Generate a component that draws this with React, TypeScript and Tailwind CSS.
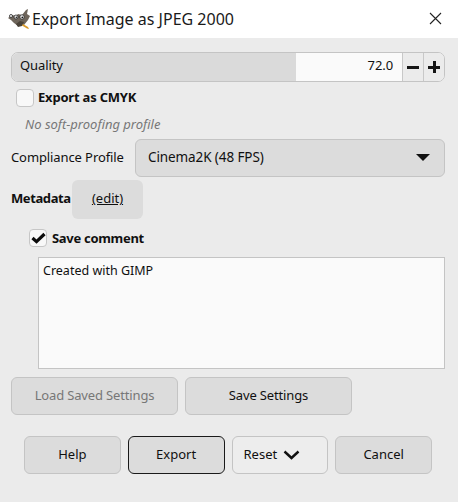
const font = "font-['Noto_Sans',sans-serif]";
const btn = "flex h-[38px] items-center justify-center rounded-[6px] border";
const plain = "border-[#c4c4c4] bg-[#dcdcdc] text-[#101010]";

const GimpLogo = () => (
  <svg width="24" height="22" viewBox="0 0 24 22" className="shrink-0">
    <path d="M1 10 L5 7 L9 8 L11 6 L15 7 L19 2 L21 1 L20 6 L23 8 L21 12 L17 17 L11 18 L7 15 L4 12 Z" fill="#6e655b" />
    <path d="M9 16 L13 13 L17 14 L15 18 L11 19 Z" fill="#4a4339" />
    <circle cx="4" cy="8" r="1.5" fill="#fff" stroke="#222" strokeWidth="0.8" />
    <circle cx="9" cy="9" r="2" fill="#fff" stroke="#222" strokeWidth="0.8" />
    <circle cx="15" cy="9" r="2.2" fill="#fff" stroke="#222" strokeWidth="0.8" />
    <circle cx="9.3" cy="9.3" r="0.8" fill="#111" />
    <circle cx="15.3" cy="9.3" r="0.9" fill="#111" />
    <path d="M16 16 L21 19 L22 21 L20 20.5 L15 17.5 Z" fill="#d99a2b" />
  </svg>
);

const Check = () => (
  <svg width="15" height="12" viewBox="0 0 15 12">
    <path d="M1.5 6 L5.5 9.6 L13.5 2" fill="none" stroke="#0c0c0c" strokeWidth="3.2" />
  </svg>
);

export default function App() {
  return (
    <div className={`${font} flex h-[502px] w-[458px] flex-col overflow-hidden bg-[#ebebeb] text-[#101010]`}>
      <div className="flex h-[38px] items-center bg-white pl-[7px] pr-[16px]">
        <GimpLogo />
        <span className="ml-[1px] flex-1 text-[16px] text-[#1a1a1a]">Export Image as JPEG 2000</span>
        <svg width="13" height="13" viewBox="0 0 13 13" className="mb-[2px]">
          <path d="M1 1 L12 12 M12 1 L1 12" stroke="#222" strokeWidth="1.1" fill="none" />
        </svg>
      </div>

      <div className="flex flex-col pl-[11px] pr-[13px]">
        <div className="mt-[14px] flex h-[30px] items-stretch overflow-hidden rounded-[7px] border border-[#c4c4c4] bg-[#fafafa] text-[13px] tracking-[-0.1px]">
          <div className="flex w-[284px] items-center bg-[#dadada] pb-[2px] pl-[8px]">Quality</div>
          <div className="flex flex-1 items-center justify-end pb-[2px] pr-[9px]">72.0</div>
          <div className="flex w-[21px] items-center justify-center border-l border-[#c8c8c8] bg-[#ebebeb]">
            <span className="h-[3px] w-[12px] bg-[#151515]" />
          </div>
          <div className="relative flex w-[21px] items-center justify-center border-l border-[#c8c8c8] bg-[#ebebeb]">
            <span className="h-[3px] w-[12px] bg-[#151515]" />
            <span className="absolute h-[12px] w-[3px] bg-[#151515]" />
          </div>
        </div>

        <div className="mt-[6px] flex items-center pl-[5px]">
          <div className="h-[18px] w-[18px] rounded-[4px] border border-[#c6c6c6] bg-[#f8f8f8]" />
          <span className="ml-[4px] text-[13px] font-bold tracking-[-0.2px]">Export as CMYK</span>
        </div>

        <div className="mt-[6px] pl-[14px] text-[13px] italic leading-[20px] text-[#777]">No soft-proofing profile</div>

        <div className="mt-[5px] flex items-center">
          <span className="w-[124px] text-[13px] tracking-[-0.1px]">Compliance Profile</span>
          <div className="flex h-[38px] flex-1 items-center justify-between rounded-[6px] border border-[#c4c4c4] bg-[#dcdcdc] pl-[12px] pr-[14px] text-[13.5px] tracking-[-0.1px]">
            Cinema2K (48 FPS)
            <span className="h-0 w-0 border-x-[7px] border-t-[7px] border-x-transparent border-t-[#111]" />
          </div>
        </div>

        <div className="mt-[3px] flex items-center">
          <span className="w-[61px] text-[13px] font-bold tracking-[-0.4px]">Metadata</span>
          <div className="flex h-[39px] w-[71px] items-center justify-center rounded-[6px] bg-[#dcdcdc] text-[13px] underline">(edit)</div>
        </div>

        <div className="mt-[10px] flex items-center pl-[18px]">
          <div className="flex h-[18px] w-[18px] items-center justify-center rounded-[4px] border border-[#c6c6c6] bg-[#f8f8f8]">
            <Check />
          </div>
          <span className="ml-[5px] text-[13px] font-bold tracking-[-0.3px]">Save comment</span>
        </div>

        <div className="ml-[27px] mt-[9px] h-[112px] border border-[#c4c4c4] bg-[#fafafa] px-[4px] pt-[4px] text-[12.5px] leading-[18px]">
          Created with GIMP
        </div>

        <div className="mt-[8px] flex gap-[7px] text-[13px] tracking-[-0.15px]">
          <div className={`${btn} w-[167px] border-[#c4c4c4] bg-[#dcdcdc] text-[#777]`}>Load Saved Settings</div>
          <div className={`${btn} w-[167px] ${plain}`}>Save Settings</div>
        </div>

        <div className="ml-[13px] mt-[21px] flex gap-[7px] text-[13px]">
          <div className={`${btn} w-[96.75px] ${plain}`}>Help</div>
          <div className={`${btn} w-[96.75px] border-[#1a1a1a] bg-[#dcdcdc]`}>Export</div>
          <div className={`${btn} w-[96.75px] justify-start gap-[6px] border-[#c4c4c4] bg-[#ededed] pl-[11px]`}>
            Reset
            <svg width="17" height="10" viewBox="0 0 17 10">
              <path d="M1.5 1.5 L8.5 8 L15.5 1.5" fill="none" stroke="#111" strokeWidth="2.4" />
            </svg>
          </div>
          <div className={`${btn} w-[96.75px] ${plain}`}>Cancel</div>
        </div>
      </div>
    </div>
  );
}
